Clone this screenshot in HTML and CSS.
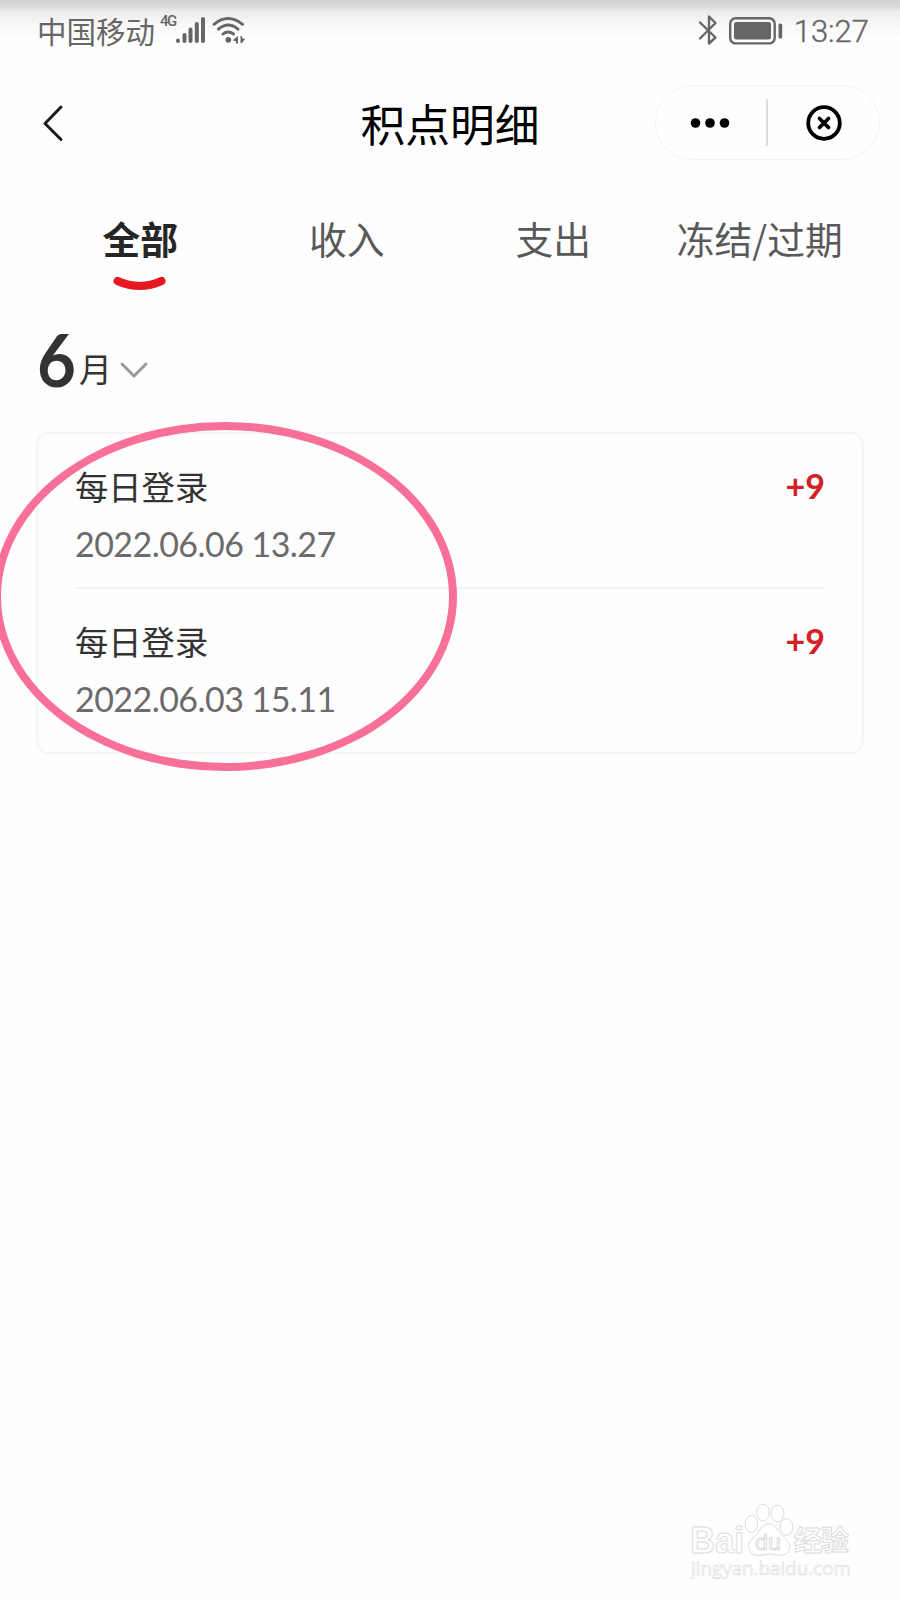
FILE: index.html
```
<!DOCTYPE html>
<html lang="zh-CN">
<head>
  <meta charset="UTF-8">
  <meta name="viewport" content="width=device-width, initial-scale=1.0">
  <title>积点明细</title>
  <link rel="stylesheet" href="styles.css">
</head>
<body>
  <div class="page">
    <div class="status-bar">
      <span class="carrier">中国移动</span>
      <span class="network">4G</span>
      <svg class="signal" width="30" height="28" viewBox="0 0 30 28" fill="none" stroke="#666" stroke-width="4" stroke-linecap="round">
        <path d="M2 24.5v.5M8.500 19v6M14.500 13.500v11.500M20.800 8v17M27 3v22"/>
      </svg>
      <svg class="wifi" width="34" height="28" viewBox="0 0 34 28" fill="none" stroke="#666" stroke-width="2.900" stroke-linecap="round">
        <path d="M2 8.300Q16 -3.300 30.500 8.300M6.500 13.200Q16 5 26 13.200M11 18Q16 13.800 21.500 18"/>
        <circle cx="16.300" cy="23.800" r="2.900" fill="#666" stroke="none"/>
        <path d="M26 20v7.500h-2v-2.500h-2.500v-1.500zM28.500 20h1.500v2l3 1-3 4h-1.500z" fill="#666" stroke="none"/>
      </svg>
      <svg class="bluetooth" width="20" height="32" viewBox="0 0 20 32" fill="none" stroke="#666" stroke-width="2.400" stroke-linecap="round" stroke-linejoin="round">
        <path d="M2 8.500L17.500 23.500 11 29.500V2.500L17.500 9 2 24.500"/>
      </svg>
      <svg class="battery" width="54" height="28" viewBox="0 0 54 28">
        <rect x="1.200" y="1.200" width="44.500" height="25.200" rx="5.500" fill="none" stroke="#666" stroke-width="2.400"/>
        <rect x="5" y="5" width="37" height="17.500" rx="2.500" fill="#666"/>
        <rect x="49.500" y="6.500" width="3.700" height="15" rx="1.500" fill="#666"/>
      </svg>
      <span class="time">13:27</span>
    </div>

    <div class="header">
      <svg class="back" width="22" height="38" viewBox="0 0 22 38" fill="none" stroke="#1a1a1a" stroke-width="3" stroke-linecap="round" stroke-linejoin="round">
        <path d="M19 3L3 19.500l16 16"/>
      </svg>
      <h1 class="title">积点明细</h1>
      <div class="capsule">
        <svg class="more" width="40" height="12" viewBox="0 0 40 12">
          <circle cx="5.500" cy="6" r="4.800"/>
          <circle cx="20" cy="6" r="4.800"/>
          <circle cx="34.500" cy="6" r="4.800"/>
        </svg>
        <span class="split"></span>
        <svg class="close" width="36" height="36" viewBox="0 0 36 36" fill="none" stroke="#000" stroke-width="3.800" stroke-linecap="round">
          <circle cx="18" cy="18" r="15.800"/>
          <path d="M13.500 13.500l9 9M22.500 13.500l-9 9"/>
        </svg>
      </div>
    </div>

    <div class="tabs">
      <div class="tab active">全部
        <svg class="smile" width="54" height="16" viewBox="0 0 54 16" fill="none" stroke="#e81822" stroke-width="8" stroke-linecap="round">
          <path d="M4.500 5Q27 15 48.500 5"/>
        </svg>
      </div>
      <div class="tab">收入</div>
      <div class="tab">支出</div>
      <div class="tab">冻结/过期</div>
    </div>

    <div class="month">
      <span class="month-num">6</span>
      <span class="month-unit">月</span>
      <svg class="arrow" width="30" height="18" viewBox="0 0 30 18" fill="none" stroke="#999" stroke-width="3" stroke-linecap="round" stroke-linejoin="round">
        <path d="M3 3l12 12L27 3"/>
      </svg>
    </div>

    <div class="card">
      <div class="record">
        <div class="info">
          <div class="name">每日登录</div>
          <div class="date">2022.06.06 13.27</div>
        </div>
        <div class="points">+9</div>
      </div>
      <div class="record">
        <div class="info">
          <div class="name">每日登录</div>
          <div class="date">2022.06.03 15.11</div>
        </div>
        <div class="points">+9</div>
      </div>
    </div>

    <!-- circle drawn over the records -->
    <div class="mark"></div>

    <svg class="watermark" width="170" height="84" viewBox="0 0 170 84" fill="#fff" stroke="#dcdcdc" stroke-width="1">
      <g class="brand">
        <text x="0" y="53" font-size="36" textLength="54" lengthAdjust="spacingAndGlyphs">Bai</text>
        <ellipse cx="61.500" cy="24" rx="6.300" ry="8.300"/>
        <ellipse cx="73" cy="12.500" rx="6.300" ry="8.500"/>
        <ellipse cx="87.500" cy="13.500" rx="6.500" ry="8.300"/>
        <ellipse cx="96.500" cy="27" rx="6.300" ry="8.300"/>
        <path d="M79 24C70 24 70 33 63 38C56 44 58 54 66 55C71 56 75 54 79 54C84 54 87 56 92 55C101 54 102 44 95 38C88 33 87 24 79 24Z"/>
        <text x="65" y="50" font-size="22" textLength="26" lengthAdjust="spacingAndGlyphs" class="du">du</text>
        <text class="cn" x="104" y="51" font-size="28" textLength="55">经验</text>
      </g>
      <text class="site" x="1" y="75" font-size="19" textLength="160">jingyan.baidu.com</text>
    </svg>
  </div>
</body>
</html>
```
FILE: styles.css
```
* {
  box-sizing: border-box;
}

body {
  margin: 0;
  background-color: #fefefe;
  font-family: "Noto Sans CJK SC", sans-serif;
  color: #333;
}

.page {
  position: relative;
  width: 900px;
  height: 1600px;
  overflow: hidden;
  background: linear-gradient(to bottom, #d2d2d2 0, #d8d8d8 5px, #ececec 12px, #f8f8f8 24px, #fefefe 38px);
}

.status-bar {
  display: flex;
  align-items: center;
  height: 60px;
  padding: 0 31px 0 37px;
  color: #666;
}

.carrier {
  font-size: 29.5px;
  line-height: 60px;
}

.network {
  margin: 0 0 18px 5px;
  width: 16px;
  font-family: "Roboto", sans-serif;
  font-size: 15px;
  font-weight: 500;
  line-height: 16px;
  letter-spacing: -1.5px;
}

.wifi {
  margin-left: 6px;
}

.bluetooth {
  margin-left: auto;
}

.battery {
  margin: 1px 11px 0;
}

.time {
  font-family: "Roboto", sans-serif;
  font-size: 31px;
  font-weight: 300;
  -webkit-text-stroke: 0.4px #666;
  line-height: 60px;
  padding-top: 4px;
}

.header {
  display: grid;
  grid-template-columns: 225px 1fr 225px;
  align-items: center;
  height: 125px;
  padding: 0 20px;
}

.back {
  margin-left: 22px;
}

.title {
  margin: 0;
  color: #000;
  font-size: 44.8px;
  font-weight: 400;
  line-height: 60px;
  text-align: center;
  padding-top: 1px;
}

.capsule {
  display: flex;
  align-items: center;
  height: 75px;
  padding-left: 34px;
  border: 1px solid #f3f3f3;
  border-radius: 38px;
}

.split {
  flex: none;
  width: 2px;
  height: 47px;
  margin: 0 38px 0 36px;
  background-color: #ddd;
}

.more,
.close {
  flex: none;
}

.tabs {
  display: grid;
  grid-template-columns: repeat(4, 1fr);
  height: 124px;
  padding: 23px 37px 0;
}

.tab {
  display: flex;
  flex-direction: column;
  align-items: center;
  color: #595959;
  font-size: 37.8px;
  line-height: 60px;
  white-space: nowrap;
}

.active {
  color: #262626;
  font-weight: 700;
}

.smile {
  margin-top: 8px;
}

.month {
  display: flex;
  align-items: flex-start;
  height: 123px;
  padding-left: 37px;
}

.month-num {
  font-family: "Lato", sans-serif;
  font-size: 73px;
  font-weight: 700;
  line-height: 100px;
  width: 41px;
  transform: scaleX(0.92);
  transform-origin: left;
}

.month-unit {
  margin: 39px 0 0 1px;
  font-size: 33px;
  line-height: 40px;
}

.arrow {
  margin: 52px 0 0 7px;
}

.card {
  width: 828px;
  height: 322px;
  margin: 0 36px;
  padding: 0 37px;
  border: 2px solid #f5f5f5;
  border-radius: 13px;
}

.record {
  display: flex;
  justify-content: space-between;
  height: 155px;
  padding-top: 27px;
}

.record:first-child {
  border-bottom: 2px solid #f5f5f5;
}

.name {
  font-size: 33.3px;
  line-height: 50px;
}

.date {
  margin-top: 8px;
  color: #6b6b6b;
  font-family: "Lato", sans-serif;
  font-size: 34px;
  line-height: 50px;
  letter-spacing: -0.55px;
  white-space: nowrap;
}

.points {
  color: #d42027;
  font-family: "Lato", sans-serif;
  font-size: 34px;
  font-weight: 700;
  line-height: 50px;
}

.mark {
  position: absolute;
  left: -7px;
  top: 422px;
  width: 464px;
  height: 349px;
  border: 8px solid #f86f98;
  border-radius: 50%;
}

.watermark {
  position: absolute;
  left: 690px;
  top: 1500px;
}

.brand {
  font-family: "Liberation Sans", sans-serif;
  font-weight: 700;
}

.du {
  font-weight: 400;
}

.cn {
  font-family: "Noto Sans CJK SC", sans-serif;
}

.site {
  font-family: "Open Sans", sans-serif;
  stroke-width: 0.6px;
}
```
